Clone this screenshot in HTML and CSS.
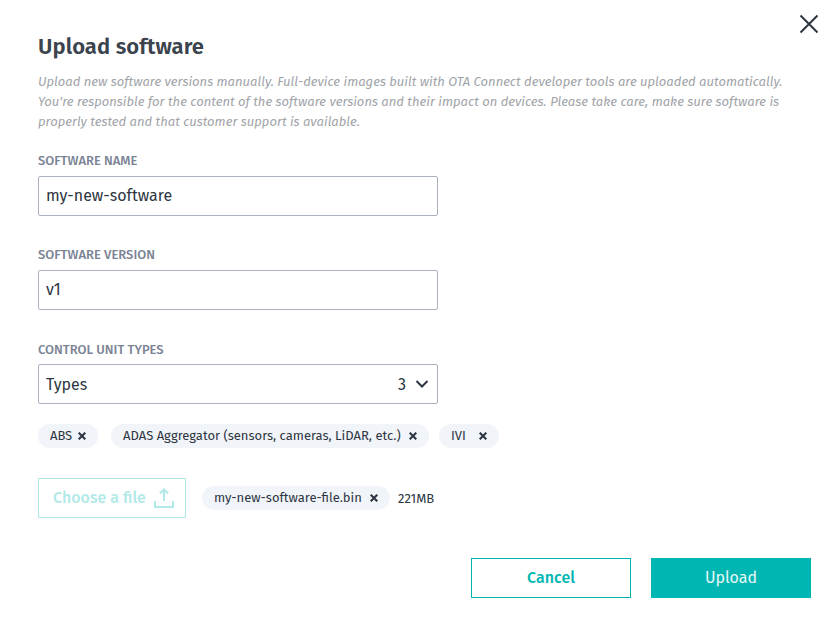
FILE: index.html
```html
<!DOCTYPE html>
<html lang="en"><head><meta charset="utf-8"><title>Upload software</title><link rel="stylesheet" href="styles.css"></head>
<body>
<main class="dialog">
<button class="close" aria-label="Close"><svg width="20" height="20" viewBox="0 0 20 20"><path d="M1.500 1.500l17 17M18.500 1.500l-17 17"/></svg></button>
<h1>Upload software</h1>
<p class="intro">Upload new software versions manually. Full-device images built with OTA Connect developer tools are uploaded automatically.<br>You're responsible for the content of the software versions and their impact on devices. Please take care, make sure software is<br>properly tested and that customer support is available.</p>
<section class="field"><label>SOFTWARE NAME</label><div class="input">my-new-software</div></section>
<section class="field"><label>SOFTWARE VERSION</label><div class="input">v1</div></section>
<section class="field types"><label>CONTROL UNIT TYPES</label><div class="input select"><span>Types</span><span class="count">3</span><svg class="chevron" width="14" height="10" viewBox="0 0 14 10"><path d="M1.500 2l5.500 5.500L12.500 2"/></svg></div></section>
<div class="chips">
<div class="chip abs"><span>ABS</span><svg class="x" viewBox="0 0 8 8"><path d="M.7 .7l6.600 6.600M7.300 .7L.7 7.300"/></svg></div>
<div class="chip adas"><span>ADAS Aggregator (sensors, cameras, LiDAR, etc.)</span><svg class="x" viewBox="0 0 8 8"><path d="M.7 .7l6.600 6.600M7.300 .7L.7 7.300"/></svg></div>
<div class="chip ivi"><span>IVI</span><svg class="x" viewBox="0 0 8 8"><path d="M.7 .7l6.600 6.600M7.300 .7L.7 7.300"/></svg></div>
</div>
<div class="file-row"><button class="choose"><span>Choose a file</span><svg width="20" height="20" viewBox="0 0 20 20"><path d="M1 13v6h18v-6M10 13V1.500M5.800 5.500L10 1.500l4.200 4"/></svg></button><div class="chip file"><span>my-new-software-file.bin</span><svg class="x" viewBox="0 0 8 8"><path d="M.7 .7l6.600 6.600M7.300 .7L.7 7.300"/></svg></div><span class="size">221MB</span></div>
<footer><button class="action cancel">Cancel</button><button class="action upload">Upload</button></footer>
</main>
</body></html>
```
FILE: styles.css
```css
*{box-sizing:border-box}
body{margin:0;background:#fff;color:#2d3642;font-family:"Fira Sans","Noto Sans",sans-serif}
button{font:inherit;background:none;padding:0;margin:0}
.dialog{position:relative;width:835px;height:620px;padding:32px 24px 22px 38px}
.close{position:absolute;left:799px;top:14px;width:20px;height:20px;border:0;color:#2d3642}
svg{display:block;fill:none;stroke:currentColor}
.close svg{stroke-width:2}
h1{margin:0;font-size:22px;line-height:30px;font-weight:600;letter-spacing:.08px;color:#3b434d}
.intro{margin:10px 0 20px;height:60px;font-size:13px;line-height:20px;font-style:italic;letter-spacing:.02px;color:#a0a3a8;white-space:nowrap}
.field{width:400px;height:64px;margin-bottom:30px}
.field label{display:block;height:24px;line-height:18px;font-size:13px;font-weight:500;color:#7b8495}
.input{height:40px;border:1px solid #acb1c1;border-radius:2px;padding:0 7px;line-height:38px;font-size:16px}
.select{display:flex;align-items:center;line-height:20px}
.select span{padding-top:1px}
.count{margin-left:auto;margin-right:9px}
.chevron{stroke-width:2;margin-right:1px}
.types{margin-bottom:20px}
.types label{line-height:19px}
.chips{display:flex;height:24px}
.chip{display:flex;align-items:center;justify-content:space-between;height:24px;padding:0 12px;border-radius:12px;background:#f1f4f9;font-size:13px;line-height:22px}
.x{width:8px;height:8px;stroke-width:2.100}
.abs{width:60px}.adas{width:318px;margin-left:13px}.ivi{width:60px;margin-left:10px}
.file-row{display:flex;align-items:center;height:40px;margin-top:30px}
.choose{display:flex;align-items:center;width:148px;height:40px;padding:0 11px 0 14px;justify-content:space-between;border:1px solid #b2e9e8;color:#b2e9e8;font-size:16px;font-weight:500}
.choose span{padding-bottom:2px}
.choose svg{stroke-width:2}
.file{width:188px;margin-left:16px}
.size{margin-left:8px;font-size:13px}
footer{display:flex;justify-content:flex-end;gap:20px;margin-top:40px}
.action{width:160px;height:40px;border:1px solid #00b6b2;font-size:16px;padding-bottom:2px}
.cancel{color:#00b6b2;font-weight:500}
.upload{background:#00b6b2;color:#e6f8f7}
```
